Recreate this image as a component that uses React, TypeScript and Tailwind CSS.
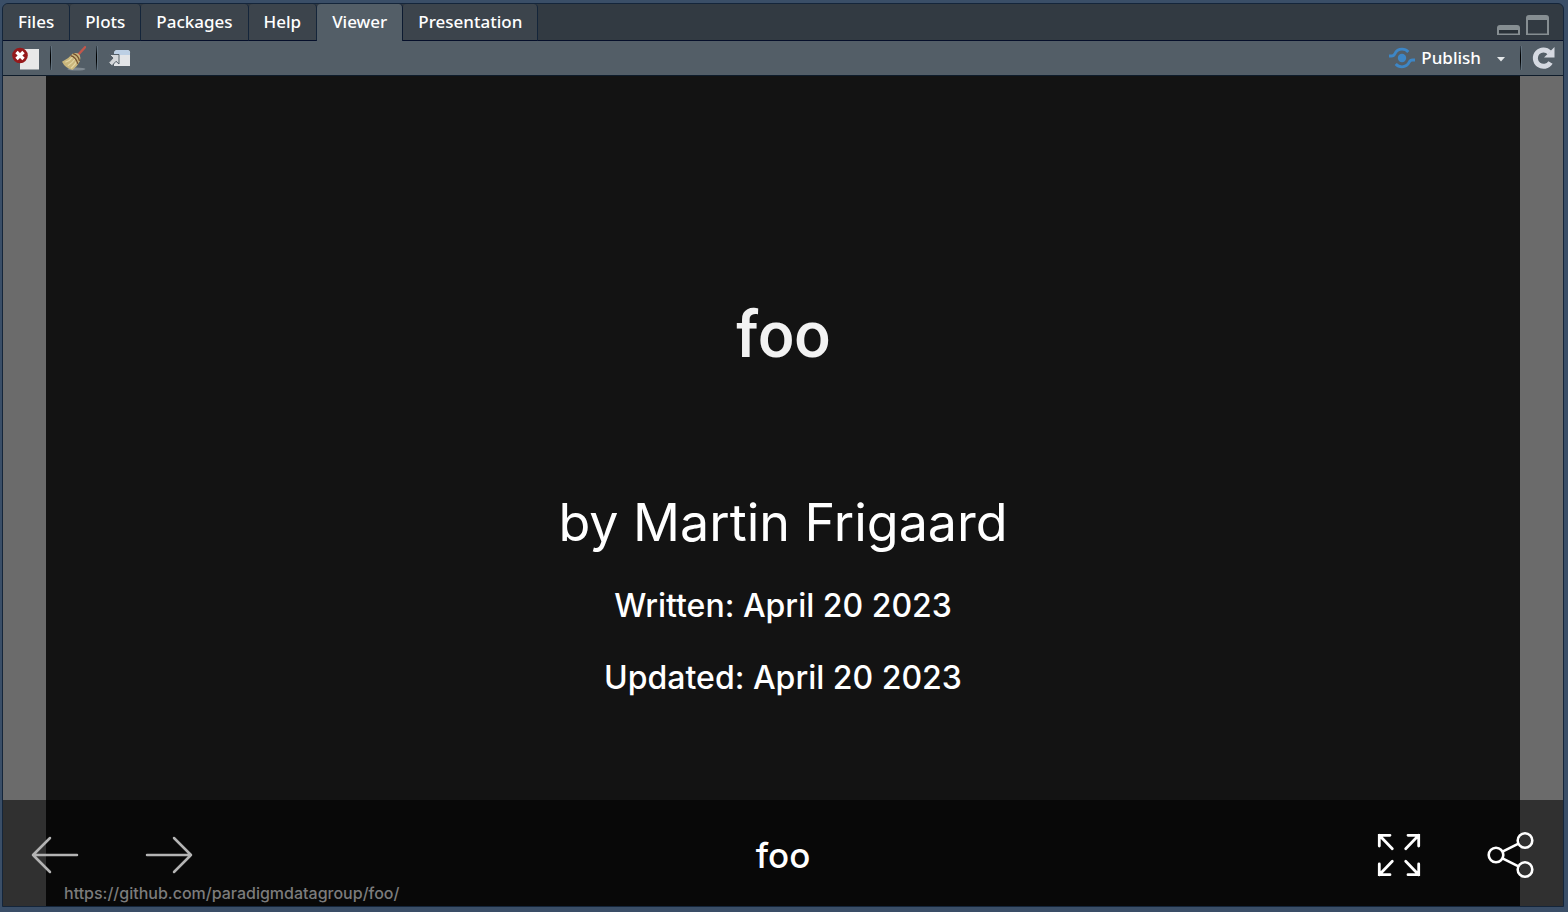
import type { ReactNode } from "react";

const tabs = ["Files", "Plots", "Packages", "Help", "Viewer", "Presentation"];
const activeTab = "Viewer";

function Separator() {
  return (
    <span
      aria-hidden="true"
      className="h-6 w-[2px] border-r border-[#62717d] bg-linear-to-b from-[#3a4650] via-black to-[#3a4650]"
    />
  );
}

function IconButton({ label, children }: { label: string; children: ReactNode }) {
  return (
    <button type="button" aria-label={label} title={label} className="shrink-0">
      {children}
    </button>
  );
}

function RemoveIcon() {
  return (
    <svg width="28" height="24" viewBox="0 0 28 24" className="block">
      <rect x="8" y="3" width="19" height="20.500" fill="#e8e8e8" />
      <circle cx="8" cy="9.500" r="7.800" fill="#96191b" />
      <path d="M4.500 6l7 7M11.500 6l-7 7" stroke="#fff" strokeWidth="3.400" />
    </svg>
  );
}

function BroomIcon() {
  return (
    <svg width="24" height="25" viewBox="0 0 25 26" className="block">
      <ellipse cx="15" cy="24" rx="9.500" ry="1.600" fill="#8b949c" opacity=".8" />
      <path d="M16.500 9.500L24 1.200" stroke="#c2574b" strokeWidth="2.400" strokeLinecap="round" />
      <path
        d="M11 8q5-2 7.500 1.500 1.500 3 0 6.500-2.500 5-7.500 9Q3.500 23.500 0 16.500q6.500-3 11-8.500z"
        fill="#c9b67c"
      />
      <path
        d="M3.500 17q5-2 7.500-5.500M6 20.500q4.500-2.500 7.500-7M9.500 23.200q3.500-3.300 6-7.500"
        fill="none"
        stroke="#e3d6a4"
        strokeWidth="1.200"
      />
      <path d="M9 10q5.500 1.500 7.500 8.500M11.500 8q5.500 1.500 6.700 7.500" fill="none" stroke="#76512f" strokeWidth="1.400" />
    </svg>
  );
}

function PopoutIcon() {
  return (
    <svg width="23" height="20" viewBox="0 0 23 20" className="block">
      <path d="M6 18V5.500q0-3.500 3.500-3.500h9.500Q22 2 22 4.500V18z" fill="#e2e4e7" />
      <path d="M6 7V5.500q0-3.500 3.500-3.500h9.500Q22 2 22 4.500V7z" fill="#bccfe4" />
      <path
        d="M1.500 6.500h9.500v9.500l-3-2.700-4 4.500-3.300-3 4.300-4.800z"
        fill="#d4d7da"
        stroke="#535e67"
        strokeWidth="1"
      />
    </svg>
  );
}

function PublishIcon() {
  return (
    <svg width="26" height="22" viewBox="0 0 26 22" fill="none" className="block">
      <circle cx="13" cy="11" r="4.200" fill="#3d86c6" />
      <path
        d="M0 9h2.500Q4.800 9 5.800 6.800 8 2.200 13 2.200q3.800 0 6.300 2.800M26 13h-2.500q-2.300 0-3.300 2.200-2.200 4.600-7.200 4.600-3.800 0-6.300-2.800"
        stroke="#3d86c6"
        strokeWidth="2.800"
      />
    </svg>
  );
}

function RefreshIcon() {
  return (
    <svg width="23" height="24" viewBox="0 0 23 24" fill="none" className="block">
      <path d="M17.500 6.500A8.200 8.200 0 1 0 18.500 16.500" stroke="#d5d9e1" strokeWidth="5" />
      <path d="M22.500 1v10.500H12z" fill="#d5d9e1" />
    </svg>
  );
}

function MinimizeIcon() {
  return (
    <svg width="23" height="22" viewBox="0 0 23 22" className="block">
      <path d="M0 21v-7q0-3 3-3h17q3 0 3 3v7z" fill="#868e92" />
      <rect x="2" y="16" width="19" height="3.500" fill="#293138" />
    </svg>
  );
}

function MaximizeIcon() {
  return (
    <svg width="23" height="22" viewBox="0 0 23 22" className="block">
      <path d="M0 21V4q0-3 3-3h17q3 0 3 3v17z" fill="#868e92" />
      <rect x="2" y="6" width="19" height="13.500" fill="#323a42" />
    </svg>
  );
}

function ArrowIcon({ right = false }: { right?: boolean }) {
  return (
    <svg
      width="48"
      height="40"
      viewBox="0 0 48 40"
      fill="none"
      stroke="currentColor"
      strokeWidth="2.500"
      strokeLinecap="round"
      strokeLinejoin="round"
      className="block"
    >
      {right ? <path d="M2 20h44M29 3l17 17-17 17" /> : <path d="M46 20H2M19 3L2 20l17 17" />}
    </svg>
  );
}

function FullscreenIcon() {
  return (
    <svg width="44" height="44" viewBox="0 0 44 44" fill="none" stroke="currentColor" strokeWidth="2.800" strokeLinecap="round" className="block">
      <path d="M2.300 13V2.300H13M2.300 2.300l13 13.500M31 2.300h10.700V13M41.700 2.300l-13 13.500M2.300 31v10.700H13M2.300 41.700l13-13.500M31 41.700h10.700V31M41.700 41.700l-13-13.500" />
    </svg>
  );
}

function ShareIcon() {
  return (
    <svg width="48" height="48" viewBox="0 0 48 48" fill="none" stroke="currentColor" strokeWidth="2.600" className="block">
      <circle cx="9" cy="24" r="7.300" />
      <circle cx="38" cy="9.500" r="7.300" />
      <circle cx="38" cy="38.500" r="7.300" />
      <path d="M15.500 20.700l16-8M15.500 27.300l16 8" />
    </svg>
  );
}

export default function App() {
  return (
    <div className="flex min-h-screen flex-col bg-[#3a4e67] pt-[3px] pr-1 pb-[5px] pl-[2px]">
      <div className="flex grow flex-col overflow-hidden rounded-t-md border border-[#14253a] bg-[#323a42]">
        <header className="flex justify-between font-['Noto_Sans','Open_Sans',sans-serif] text-[17px] leading-6 font-medium text-white">
          <div role="tablist" className="flex">
            {tabs.map((tab) => (
              <button
                key={tab}
                type="button"
                role="tab"
                aria-selected={tab === activeTab}
                className={
                  tab === activeTab
                    ? "h-[37px] rounded-t border-r border-[#0c1a30] bg-[#535e67] px-[15px] pb-[2px]"
                    : "h-[37px] rounded-t border-r border-b border-r-[#14253a] border-b-[#050f2a] bg-[#3c444c] px-[15px] pb-px"
                }
              >
                {tab}
              </button>
            ))}
          </div>
          <div className="flex grow items-end justify-end gap-[6px] border-b border-[#050f2a] pr-[14px] pb-1">
            <IconButton label="Minimize">
              <MinimizeIcon />
            </IconButton>
            <IconButton label="Maximize">
              <MaximizeIcon />
            </IconButton>
          </div>
        </header>

        <div
          role="toolbar"
          aria-label="Viewer"
          className="flex h-[35px] items-center justify-between border-b border-[#0e1c2b] bg-[#535e67] pr-2 pl-[9px]"
        >
          <div className="flex items-center gap-[10px]">
            <IconButton label="Remove current viewer item">
              <RemoveIcon />
            </IconButton>
            <Separator />
            <IconButton label="Clear all viewer items">
              <BroomIcon />
            </IconButton>
            <Separator />
            <IconButton label="Show in new window">
              <PopoutIcon />
            </IconButton>
          </div>
          <div className="flex items-center gap-[10px] font-['Noto_Sans','Open_Sans',sans-serif] text-[17px] leading-6 font-medium text-white">
            <button type="button" className="flex items-center gap-[6px]">
              <PublishIcon />
              Publish
            </button>
            <button type="button" aria-label="Publish options" className="pr-1 pl-[5px]">
              <svg width="10" height="8" viewBox="0 0 10 8" className="block">
                <path d="M1 3h8L5 7.500z" fill="#e5e8ea" />
              </svg>
            </button>
            <Separator />
            <IconButton label="Refresh viewer">
              <RefreshIcon />
            </IconButton>
          </div>
        </div>

        <main className="relative flex grow flex-col bg-[#6b6b6b] px-[43px] font-['Inter',sans-serif] text-white">
          <article className="flex grow flex-col items-center bg-[#131313] px-6 pt-[212px] pb-[200px] text-center">
            <h1 className="font-['Roboto',sans-serif] text-[64px] leading-[96px] font-medium text-[#f2f2f2]">foo</h1>
            <h2 className="mt-[103px] text-[52px] leading-[72px]">by Martin Frigaard</h2>
            <p className="mt-[23px] text-[32px] leading-12 font-medium">Written: April 20 2023</p>
            <p className="mt-6 text-[32px] leading-12 font-medium">Updated: April 20 2023</p>
          </article>

          <footer className="absolute inset-x-0 bottom-0 grid h-[106px] grid-cols-[1fr_auto_1fr] items-center bg-black/55 px-7 pt-1">
            <div className="flex gap-[66px] text-[#b4b4b4]">
              <IconButton label="Previous">
                <ArrowIcon />
              </IconButton>
              <IconButton label="Next">
                <ArrowIcon right />
              </IconButton>
            </div>
            <span className="text-[35px] leading-12 font-medium">foo</span>
            <div className="flex items-center justify-end gap-[66px]">
              <IconButton label="Full screen">
                <FullscreenIcon />
              </IconButton>
              <IconButton label="Share">
                <ShareIcon />
              </IconButton>
            </div>
            <a
              href="https://github.com/paradigmdatagroup/foo/"
              className="absolute bottom-px left-[61px] text-base leading-6 font-medium text-[#7c7c7c]"
            >
              https://github.com/paradigmdatagroup/foo/
            </a>
          </footer>
        </main>
      </div>
    </div>
  );
}
